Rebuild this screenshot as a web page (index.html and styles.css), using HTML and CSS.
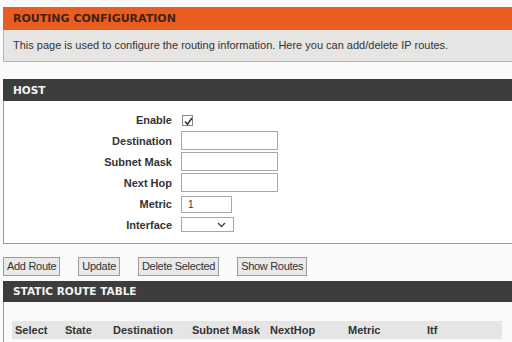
FILE: index.html
```html
<!DOCTYPE html>
<html>
<head>
<meta charset="utf-8">
<link rel="stylesheet" href="styles.css">
</head>
<body>
<div class="page">
  <section class="intro">
    <div class="title-bar">ROUTING CONFIGURATION</div>
    <div class="intro-text">This page is used to configure the routing information. Here you can add/delete IP routes.</div>
  </section>

  <section class="panel host">
    <div class="panel-head">HOST</div>
    <div class="panel-body host-body">
      <div class="form">
        <label class="lbl">Enable</label>
        <div class="field"><span class="check"><svg width="11" height="11" viewBox="0 0 11 11"><path d="M2 5.5 L4.5 8.2 L9 2" fill="none" stroke="#333" stroke-width="1.6"/></svg></span></div>
        <label class="lbl">Destination</label>
        <div class="field"><span class="input"></span></div>
        <label class="lbl">Subnet Mask</label>
        <div class="field"><span class="input"></span></div>
        <label class="lbl">Next Hop</label>
        <div class="field"><span class="input"></span></div>
        <label class="lbl">Metric</label>
        <div class="field"><span class="input small">1</span></div>
        <label class="lbl">Interface</label>
        <div class="field"><span class="select"><svg width="9" height="6" viewBox="0 0 9 6"><path d="M1 1 L4.5 4.5 L8 1" fill="none" stroke="#444" stroke-width="1.4"/></svg></span></div>
      </div>
    </div>
  </section>

  <div class="actions">
    <span class="btn">Add Route</span>
    <span class="btn">Update</span>
    <span class="btn">Delete Selected</span>
    <span class="btn">Show Routes</span>
  </div>

  <section class="panel routes">
    <div class="panel-head">STATIC ROUTE TABLE</div>
    <div class="panel-body routes-body">
      <table class="route-table">
        <colgroup>
          <col class="c1"><col class="c2"><col class="c3"><col class="c4"><col class="c5"><col class="c6"><col class="c7">
        </colgroup>
        <tr>
          <th>Select</th><th>State</th><th>Destination</th><th>Subnet Mask</th><th>NextHop</th><th>Metric</th><th>Itf</th>
        </tr>
      </table>
    </div>
  </section>
</div>
</body>
</html>
```
FILE: styles.css
```css
html, body {
  margin: 0;
  padding: 0;
  background: #fafafa;
  overflow: hidden;
}
.page {
  width: 512px;
  height: 342px;
  box-sizing: border-box;
  overflow: hidden;
  padding: 7px 0 0 3px;
  font-family: "Liberation Sans", Arial, sans-serif;
  color: #333;
}
.title-bar {
  height: 23px;
  line-height: 24px;
  background: #ea5d21;
  color: #3f2212;
  font-family: "DejaVu Sans", sans-serif;
  font-weight: bold;
  font-size: 11px;
  padding-left: 10px;
}
.intro-text {
  height: 31px;
  line-height: 31px;
  background: #e6e5e4;
  border-left: 1px solid #eba783;
  border-bottom: 1px solid #eba783;
  padding-left: 9px;
  font-size: 11px;
  color: #333;
  white-space: nowrap;
}
.panel-head {
  height: 22px;
  line-height: 22px;
  background: #3d3d3d;
  color: #f2f2f2;
  font-family: "DejaVu Sans", sans-serif;
  font-weight: bold;
  font-size: 10.5px;
  padding-left: 10px;
}
.host {
  margin-top: 17px;
}
.host-body {
  background: #fff;
  border-left: 1px solid #9a9a9a;
  border-bottom: 1px solid #9a9a9a;
  padding: 9px 0 8px;
}
.form {
  display: grid;
  grid-template-columns: 168px 1fr;
  grid-template-rows: 20px repeat(5, 21px);
  column-gap: 9px;
  align-items: center;
}
.lbl {
  text-align: right;
  font-weight: bold;
  font-size: 11px;
  color: #333;
}
.field {
  display: flex;
  align-items: center;
}
.check {
  display: block;
  width: 11px;
  height: 11px;
  margin-left: 1px;
  border: 1px solid #888;
  box-sizing: border-box;
  background: #fff;
}
.check svg { display: block; }
.input {
  display: block;
  width: 97px;
  height: 19px;
  box-sizing: border-box;
  border: 1px solid #a8a8a8;
  background: #fff;
  font-size: 10px;
  line-height: 17px;
  padding-left: 6px;
}
.input.small {
  width: 51px;
  height: 17px;
  line-height: 15px;
  margin-top: 2px;
}
.select {
  display: flex;
  align-items: center;
  justify-content: flex-end;
  width: 53px;
  height: 15px;
  box-sizing: border-box;
  border: 1px solid #a8a8a8;
  background: #fff;
  padding-right: 7px;
}
.select svg { display: block; }
.actions {
  display: flex;
  gap: 18px;
  margin-top: 13px;
  height: 19px;
}
.btn {
  display: block;
  height: 19px;
  box-sizing: border-box;
  border: 1px solid #9c9c9c;
  background: #e9e9e9;
  font-size: 11px;
  letter-spacing: -0.3px;
  line-height: 17px;
  padding: 0 3px;
  color: #333;
}
.routes {
  margin-top: 5px;
}
.routes .panel-head {
  height: 21px;
  line-height: 21px;
}
.routes-body {
  border-left: 1px solid #9a9a9a;
  padding: 19px 0 0 8px;
  height: 40px;
}
.route-table {
  border-collapse: collapse;
  width: 490px;
  table-layout: fixed;
}
.c1 { width: 50px; }
.c2 { width: 48px; }
.c3 { width: 79px; }
.c4 { width: 78px; }
.c5 { width: 78px; }
.c6 { width: 79px; }
.c7 { width: 78px; }
.route-table th {
  background: #e5e5e5;
  height: 18px;
  padding: 0 0 0 3px;
  text-align: left;
  font-size: 11px;
  font-weight: bold;
  color: #333;
  white-space: nowrap;
}
```
